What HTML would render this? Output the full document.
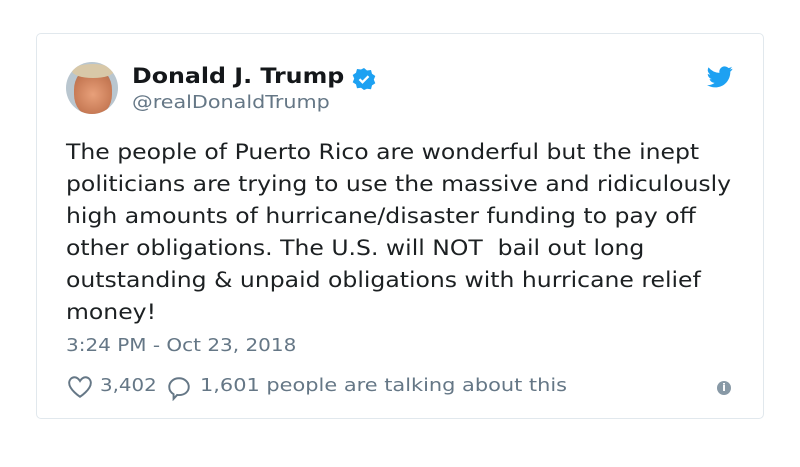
<!DOCTYPE html><html><head><style>
body{margin:0;width:800px;height:467px;background:#fff;font-family:"DejaVu Sans",sans-serif;position:relative;overflow:hidden}
.card{position:absolute;left:36px;top:33px;width:728px;height:386px;border:1px solid #e1e8ed;border-radius:5px;box-sizing:border-box}
.a{position:absolute;white-space:nowrap;transform-origin:0 0}
</style></head><body>
<div class="card"></div>
<div class="a" style="left:66px;top:62px;width:52px;height:52px;border-radius:50%;overflow:hidden;background:#b9c6cf"><div style="position:absolute;left:8px;top:6px;width:38px;height:48px;border-radius:45%;background:radial-gradient(circle at 50% 55%,#e8a07a 0,#c77a55 60%,#9a6a50 100%)"></div><div style="position:absolute;left:6px;top:2px;width:42px;height:14px;border-radius:50%;background:#d8c8a8"></div></div>
<div class="a" style="left:132px;top:64px;font-size:21px;font-weight:bold;color:#14171a;transform:scaleX(1.13)">Donald J. Trump</div>
<svg class="a" style="left:352px;top:67px" width="24" height="24" viewBox="0 0 24 24"><path d="M12 1l3 2.5 4-.5 1 3.8 3.3 2.2-1.5 3.6 1.5 3.6-3.3 2.2-1 3.8-4-.5L12 23l-3-2.3-4 .5-1-3.8L.7 15.2 2.2 11.6.7 8l3.3-2.2 1-3.8 4 .5z" fill="#1da1f2"/><path d="M7.5 12.2l3 3 6-6" stroke="#fff" stroke-width="2.3" fill="none"/></svg>
<div class="a" style="left:132px;top:92px;font-size:18px;color:#657786;transform:scaleX(1.15)">@realDonaldTrump</div>
<svg class="a" style="left:707px;top:66px" width="26" height="22" viewBox="0 0 24 20"><path d="M23.6 2.4c-.9.4-1.8.6-2.8.8 1-.6 1.8-1.5 2.1-2.7-.9.6-2 1-3.1 1.2A4.9 4.9 0 0 0 11.5 6.2 13.9 13.9 0 0 1 1.4 1.1a4.9 4.9 0 0 0 1.5 6.6c-.8 0-1.6-.3-2.2-.6 0 2.4 1.7 4.4 3.9 4.8-.7.2-1.5.2-2.2.1.6 2 2.4 3.4 4.6 3.4A9.9 9.9 0 0 1 0 17.4 14 14 0 0 0 7.5 19.6c9.1 0 14-7.5 14-14v-.6c1-.7 1.8-1.6 2.1-2.6z" fill="#1da1f2"/></svg>
<div class="a" style="left:66px;top:136px;font-size:21px;line-height:32px;color:#1c2022;transform:scaleX(1.12)">The people of Puerto Rico are wonderful but the inept<br>politicians are trying to use the massive and ridiculously<br>high amounts of hurricane/disaster funding to pay off<br>other obligations. The U.S. will NOT&nbsp; bail out long<br>outstanding &amp; unpaid obligations with hurricane relief<br>money!</div>
<div class="a" style="left:66px;top:335px;font-size:18px;color:#657786;transform:scaleX(1.11)">3:24 PM - Oct 23, 2018</div>
<svg class="a" style="left:67px;top:375px" width="26" height="24" viewBox="0 0 24 22"><path d="M12 20S2 13.5 2 7.2C2 4.3 4.2 2 6.9 2 9.2 2 10.8 3.5 12 5.5 13.2 3.5 14.8 2 17.1 2 19.8 2 22 4.3 22 7.2 22 13.5 12 20 12 20z" stroke="#657786" stroke-width="1.8" fill="none"/></svg>
<div class="a" style="left:100px;top:375px;font-size:18px;color:#657786;transform:scaleX(1.1)">3,402</div>
<svg class="a" style="left:166px;top:375px" width="26" height="26" viewBox="0 0 24 24"><path d="M12 3c5 0 9 3.4 9 8s-4 7.5-9 7.5c-.6 0-1.2 0-1.7-.1L7 22v-4.3C4.5 16.3 3 13.9 3 11c0-4.6 4-8 9-8z" stroke="#657786" stroke-width="1.8" fill="none"/></svg>
<div class="a" style="left:200px;top:375px;font-size:18px;color:#657786;transform:scaleX(1.16)">1,601 people are talking about this</div>
<div class="a" style="left:717px;top:381px;width:14px;height:14px;border-radius:50%;background:#8899a6;color:#fff;font-size:11px;font-weight:bold;text-align:center;line-height:14px">i</div>
</body></html>
